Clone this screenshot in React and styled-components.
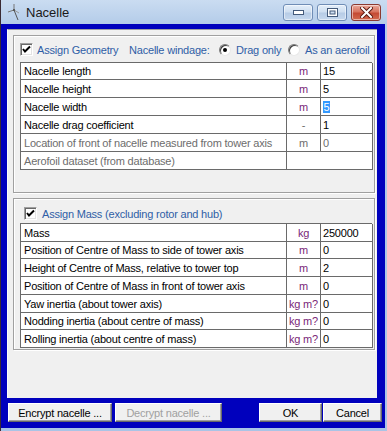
import React from 'react';
import styled, { createGlobalStyle } from 'styled-components';

const Global = createGlobalStyle`
  html, body { margin: 0; padding: 0; }
  body { width: 387px; height: 431px; overflow: hidden; background: #fff; }
  * { box-sizing: border-box; }
`;

const Window = styled.div`
  width: 387px;
  height: 431px;
  display: flex;
  flex-direction: column;
  background: linear-gradient(180deg, #cadcf1 0px, #b4cce9 24px, #a9c4e6 100%);
  border-left: 1px solid #3a2a34;
  padding: 0 2px 3px 0;
  font-family: "Liberation Sans", Arial, sans-serif;
  font-size: 11px;
  letter-spacing: -0.2px;
`;

const TitleBar = styled.div`
  height: 24px;
  flex: none;
  display: flex;
  align-items: flex-start;
  padding: 0 4px 0 6px;
`;

const TitleIcon = styled.svg`
  width: 14px;
  height: 18px;
  margin-top: 3px;
  flex: none;
`;

const TitleText = styled.span`
  font-size: 13px;
  letter-spacing: 0;
  color: #1a1a1a;
  margin: 5px 0 0 5px;
`;

const CaptionButtons = styled.div`
  margin-left: auto;
  margin-top: 4px;
  display: flex;
  gap: 4px;
`;

const CaptionButton = styled.div`
  width: 30px;
  height: 17px;
  border-radius: 3px;
  border: 1px solid ${p => (p.$close ? '#8b3a32' : '#6f8db6')};
  background: ${p =>
    p.$close
      ? 'linear-gradient(180deg, #e9a99c 0%, #d8745f 45%, #c44a34 55%, #d36a4f 100%)'
      : 'linear-gradient(180deg, #e4eef9 0%, #cfdff1 45%, #b7cce6 55%, #c6d8ee 100%)'};
  box-shadow: inset 0 0 0 1px rgba(255, 255, 255, 0.5);
  display: flex;
  align-items: center;
  justify-content: center;
`;

const Client = styled.div`
  flex: 1;
  background: #0000bd;
  padding: 5px 3px 6px 6px;
  display: flex;
  flex-direction: column;
`;

const Panel = styled.div`
  width: 370px;
  height: 369px;
  flex: none;
  background: #f0f0f0;
  border-top: 1px solid #a0a0a0;
  border-left: 1px solid #fcfcfc;
  padding: 5px 0 0 5px;
  display: flex;
  flex-direction: column;
  gap: 5px;
`;

const GroupBox = styled.div`
  width: 362px;
  height: ${p => p.$h}px;
  border: 1px solid #a0a0a0;
  box-shadow: inset 1px 1px 0 #fff, 1px 1px 0 #fff;
  padding: ${p => p.$pt}px 0 0 6px;
  display: flex;
  flex-direction: column;
`;

const HeaderRow = styled.div`
  height: 13px;
  display: flex;
  align-items: center;
  padding-left: ${p => p.$pl || 0}px;
  color: #2f5ea6;
`;

const HeaderItem = styled.div`
  display: flex;
  align-items: center;
  gap: ${p => p.$gap || 4}px;
  width: ${p => (p.$w ? `${p.$w}px` : 'auto')};
  flex: none;
  white-space: nowrap;
`;

const CheckBoxBox = styled.span`
  width: 13px;
  height: 13px;
  flex: none;
  background: #fff;
  border: 1px solid;
  border-color: #a0a0a0 #fff #fff #a0a0a0;
  box-shadow: inset 1px 1px 0 #696969, inset -1px -1px 0 #e3e3e3;
  display: flex;
  align-items: center;
  justify-content: center;
`;

const RadioCircle = styled.span`
  width: 12px;
  height: 12px;
  flex: none;
  border-radius: 50%;
  background: #fff;
  border: 1px solid;
  border-color: #7a7a7a #e8e8e8 #e8e8e8 #7a7a7a;
  box-shadow: inset 1px 1px 0 #404040;
  display: flex;
  align-items: center;
  justify-content: center;
`;

const RadioDot = styled.span`
  width: 4px;
  height: 4px;
  border-radius: 50%;
  background: #000;
`;

const Table = styled.div`
  margin-top: ${p => p.$mt}px;
  width: 352px;
  display: grid;
  grid-template-columns: 266px 34px 52px;
  border-top: 1px solid #6a6a6a;
  border-left: 1px solid #6a6a6a;
  background: #fff;
`;

const Cell = styled.div`
  height: ${p => p.$h}px;
  border-right: 1px solid #6a6a6a;
  border-bottom: 1px solid #6a6a6a;
  display: flex;
  align-items: center;
  white-space: nowrap;
  overflow: hidden;
  grid-column: ${p => p.$span || 'auto'};
`;

const LabelCell = styled(Cell)`
  padding-left: 3px;
  color: ${p => (p.$dim ? '#6d6d6d' : '#000')};
`;

const UnitCell = styled(Cell)`
  justify-content: center;
  color: ${p => (p.$dim ? '#6d6d6d' : '#7a1f78')};
`;

const ValueCell = styled(Cell)`
  padding-left: 2px;
  color: ${p => (p.$dim ? '#6d6d6d' : '#000')};
`;

const Selected = styled.span`
  background: #3399ff;
  color: #fff;
  padding: 0 0.5px;
`;

const ButtonBar = styled.div`
  margin-top: 5px;
  height: 19px;
  display: flex;
  padding-left: 1px;
`;

const Btn = styled.div`
  width: ${p => p.$w}px;
  height: 19px;
  margin-left: ${p => p.$ml || 0}px;
  background: #f0f0f0;
  border: 1px solid;
  border-color: #fff #696969 #696969 #fff;
  box-shadow: inset -1px -1px 0 #a0a0a0;
  display: flex;
  align-items: center;
  justify-content: center;
  color: ${p => (p.$disabled ? '#a0a0a0' : '#000')};
  white-space: nowrap;
`;

const Check = () => (
  <svg width="9" height="9" viewBox="0 0 9 9">
    <polyline points="1,4 3,6.5 8,1.5" fill="none" stroke="#000" strokeWidth="2" />
  </svg>
);

const CheckBox = () => (
  <CheckBoxBox>
    <Check />
  </CheckBoxBox>
);

const Radio = ({ on }) => <RadioCircle>{on && <RadioDot />}</RadioCircle>;

const geometryRows = [
  { label: 'Nacelle length', unit: 'm', value: '15', h: 17 },
  { label: 'Nacelle height', unit: 'm', value: '5', h: 18 },
  { label: 'Nacelle width', unit: 'm', value: '5', h: 18, selected: true },
  { label: 'Nacelle drag coefficient', unit: '-', value: '1', h: 18, unitDim: true },
  { label: 'Location of front of nacelle measured from tower axis', unit: 'm', value: '0', h: 18, dim: true },
];

const massRows = [
  { label: 'Mass', unit: 'kg', value: '250000', h: 18 },
  { label: 'Position of Centre of Mass to side of tower axis', unit: 'm', value: '0', h: 17 },
  { label: 'Height of Centre of Mass, relative to tower top', unit: 'm', value: '2', h: 18 },
  { label: 'Position of Centre of Mass in front of tower axis', unit: 'm', value: '0', h: 18 },
  { label: 'Yaw inertia (about tower axis)', unit: 'kg m?', value: '0', h: 18 },
  { label: 'Nodding inertia (about centre of mass)', unit: 'kg m?', value: '0', h: 17 },
  { label: 'Rolling inertia (about centre of mass)', unit: 'kg m?', value: '0', h: 18 },
];

const Row = ({ r }) => (
  <>
    <LabelCell $h={r.h} $dim={r.dim}>{r.label}</LabelCell>
    <UnitCell $h={r.h} $dim={r.dim || r.unitDim}>{r.unit}</UnitCell>
    <ValueCell $h={r.h} $dim={r.dim}>
      {r.selected ? <Selected>{r.value}</Selected> : r.value}
    </ValueCell>
  </>
);

export default function App() {
  return (
    <>
      <Global />
      <Window>
        <TitleBar>
          <TitleIcon viewBox="0 0 14 18">
            <line x1="7" y1="7" x2="11" y2="17" stroke="#555" strokeWidth="1" />
            <line x1="7" y1="7" x2="7" y2="1" stroke="#777" strokeWidth="1" />
            <line x1="7" y1="7" x2="1" y2="9" stroke="#777" strokeWidth="1" />
            <line x1="7" y1="7" x2="12" y2="10" stroke="#999" strokeWidth="1" />
            <circle cx="7" cy="7" r="1" fill="#444" />
          </TitleIcon>
          <TitleText>Nacelle</TitleText>
          <CaptionButtons>
            <CaptionButton>
              <svg width="11" height="5" viewBox="0 0 11 5">
                <rect x="0.5" y="0.5" width="10" height="4" fill="#fff" stroke="#445a7a" />
              </svg>
            </CaptionButton>
            <CaptionButton>
              <svg width="11" height="9" viewBox="0 0 11 9">
                <rect x="0.5" y="0.5" width="10" height="8" fill="#fff" stroke="#445a7a" />
                <rect x="3" y="3" width="5" height="3" fill="#cfdff1" stroke="#445a7a" strokeWidth="1" />
              </svg>
            </CaptionButton>
            <CaptionButton $close>
              <svg width="13" height="11" viewBox="0 0 13 11">
                <path d="M2 1 L11 10 M11 1 L2 10" stroke="#5a1a12" strokeWidth="4" strokeLinecap="square" />
                <path d="M2 1 L11 10 M11 1 L2 10" stroke="#fff" strokeWidth="2" strokeLinecap="square" />
              </svg>
            </CaptionButton>
          </CaptionButtons>
        </TitleBar>
        <Client>
          <Panel>
            <GroupBox $h={158} $pt={7}>
              <HeaderRow>
                <HeaderItem $w={109}>
                  <CheckBox />
                  <span>Assign Geometry</span>
                </HeaderItem>
                <HeaderItem $w={90}>Nacelle windage:</HeaderItem>
                <HeaderItem $w={69} $gap={5}>
                  <Radio on />
                  <span>Drag only</span>
                </HeaderItem>
                <HeaderItem $gap={5}>
                  <Radio />
                  <span>As an aerofoil</span>
                </HeaderItem>
              </HeaderRow>
              <Table $mt={6}>
                {geometryRows.map(r => (
                  <Row key={r.label} r={r} />
                ))}
                <LabelCell $h={18} $dim>Aerofoil dataset (from database)</LabelCell>
                <Cell $h={18} $span="span 2" />
              </Table>
            </GroupBox>
            <GroupBox $h={152} $pt={8}>
              <HeaderRow $pl={4}>
                <HeaderItem $gap={5}>
                  <CheckBox />
                  <span>Assign Mass (excluding rotor and hub)</span>
                </HeaderItem>
              </HeaderRow>
              <Table $mt={3}>
                {massRows.map(r => (
                  <Row key={r.label} r={r} />
                ))}
              </Table>
            </GroupBox>
          </Panel>
          <ButtonBar>
            <Btn $w={104}>Encrypt nacelle ...</Btn>
            <Btn $w={107} $ml={3} $disabled>Decrypt nacelle ...</Btn>
            <Btn $w={63} $ml={37}>OK</Btn>
            <Btn $w={59} $ml={1}>Cancel</Btn>
          </ButtonBar>
        </Client>
      </Window>
    </>
  );
}
